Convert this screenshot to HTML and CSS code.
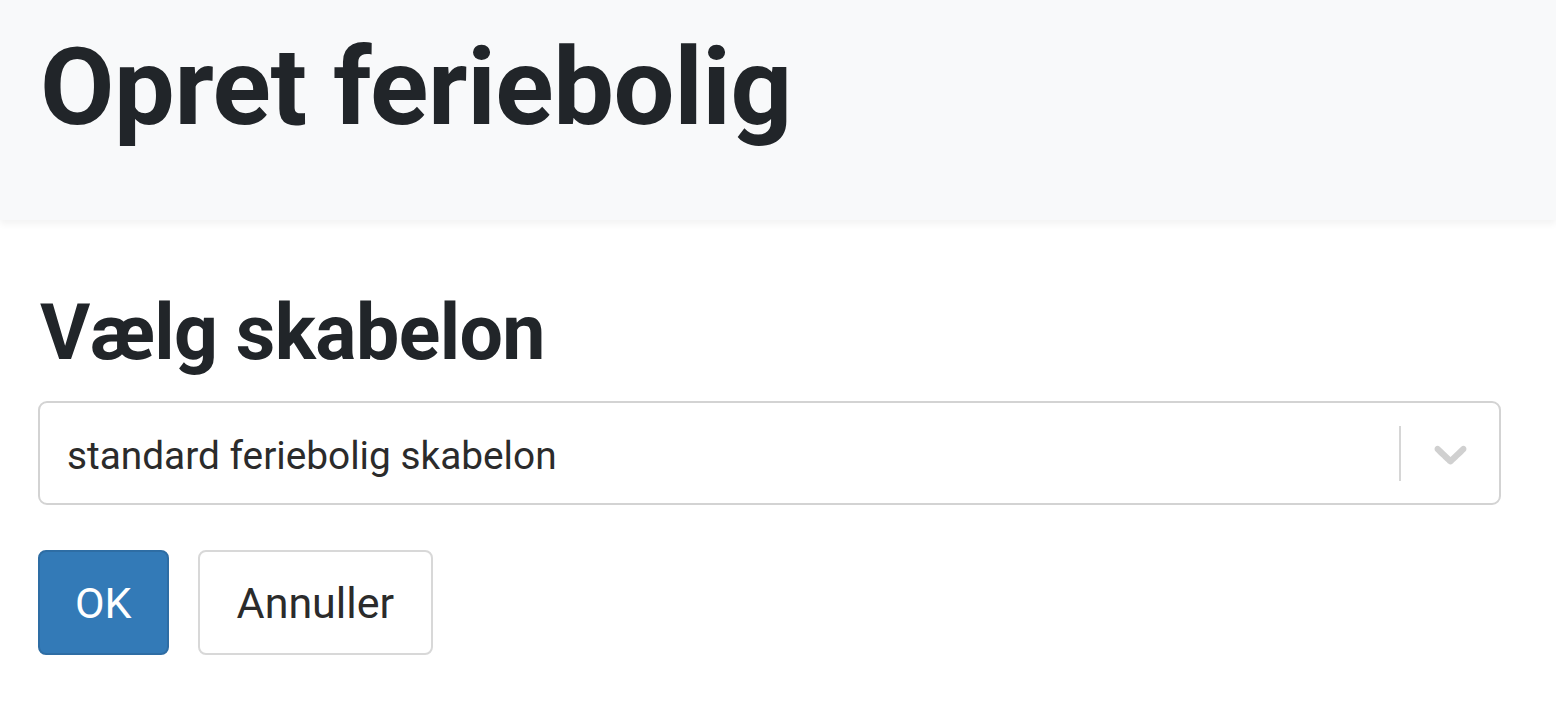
FILE: index.html
```html
<!DOCTYPE html>
<html lang="da">
<head>
  <meta charset="UTF-8">
  <title>Opret feriebolig</title>
  <meta name="viewport" content="width=device-width, initial-scale=1.0">
  <link rel="stylesheet" href="styles.css">
</head>
<body>
  <header class="page-header">
    <h1>Opret feriebolig</h1>
  </header>

  <main class="content">
    <h2>Vælg skabelon</h2>

    <div class="select">
      <div class="select-value">standard feriebolig skabelon</div>
      <div class="select-indicators">
        <span class="select-separator"></span>
        <svg class="select-chevron" viewBox="0 0 20 20" width="55" height="55" aria-hidden="true">
          <path d="M4.516 7.548c0.436-0.446 1.043-0.481 1.576 0l3.908 3.747 3.908-3.747c0.533-0.481 1.141-0.446 1.574 0 0.436 0.445 0.408 1.197 0 1.615-0.406 0.418-4.695 4.502-4.695 4.502-0.217 0.223-0.502 0.335-0.787 0.335s-0.57-0.112-0.789-0.335c0 0-4.287-4.084-4.695-4.502s-0.436-1.17 0-1.615z"></path>
        </svg>
      </div>
    </div>

    <div class="actions">
      <button class="btn btn-primary">OK</button>
      <button class="btn btn-default">Annuller</button>
    </div>
  </main>
</body>
</html>
```

FILE: styles.css
```css
* { box-sizing: border-box; margin: 0; padding: 0; }

body {
  font-family: Roboto, "Liberation Sans", sans-serif;
  color: #212529;
  background: #fff;
}

.page-header {
  height: 220px;
  padding: 23px 40px 0;
  background: #f8f9fa;
  box-shadow: 0 4px 7px rgba(0, 0, 0, 0.05);
}

.page-header h1 {
  font-size: 108px;
  font-weight: 700;
  line-height: 1.2;
  letter-spacing: -0.4px;
}

.content {
  padding: 67px 55px 0 38px;
}

.content h2 {
  font-size: 77px;
  font-weight: 700;
  line-height: 1.2;
  letter-spacing: -0.6px;
  padding-left: 2px;
  margin-bottom: 22px;
}

.select {
  display: flex;
  align-items: center;
  height: 104px;
  border: 2px solid #d3d3d3;
  border-radius: 9px;
  background: #fff;
}

.select-value {
  flex: 1;
  padding-left: 27px;
  padding-top: 4px;
  font-size: 38.8px;
  color: #2b2b2b;
}

.select-indicators {
  display: flex;
  align-items: center;
  padding-right: 21px;
}

.select-separator {
  width: 2px;
  height: 55px;
  background: #d6d6d6;
  margin-right: 22px;
}

.select-chevron { fill: #d0d0d0; }

.actions {
  display: flex;
  gap: 29px;
  margin-top: 45px;
}

.btn {
  height: 105px;
  padding: 0 35px;
  font-family: Roboto, "Liberation Sans", sans-serif;
  font-size: 43px;
  border-radius: 8px;
  border: 2px solid transparent;
  cursor: pointer;
}

.btn-primary {
  background: #337ab7;
  border-color: #2e6da4;
  color: #fff;
}

.btn-default {
  background: #fff;
  border-color: #d8d8d8;
  color: #2b2b2b;
  padding: 0 37px;
}
```
